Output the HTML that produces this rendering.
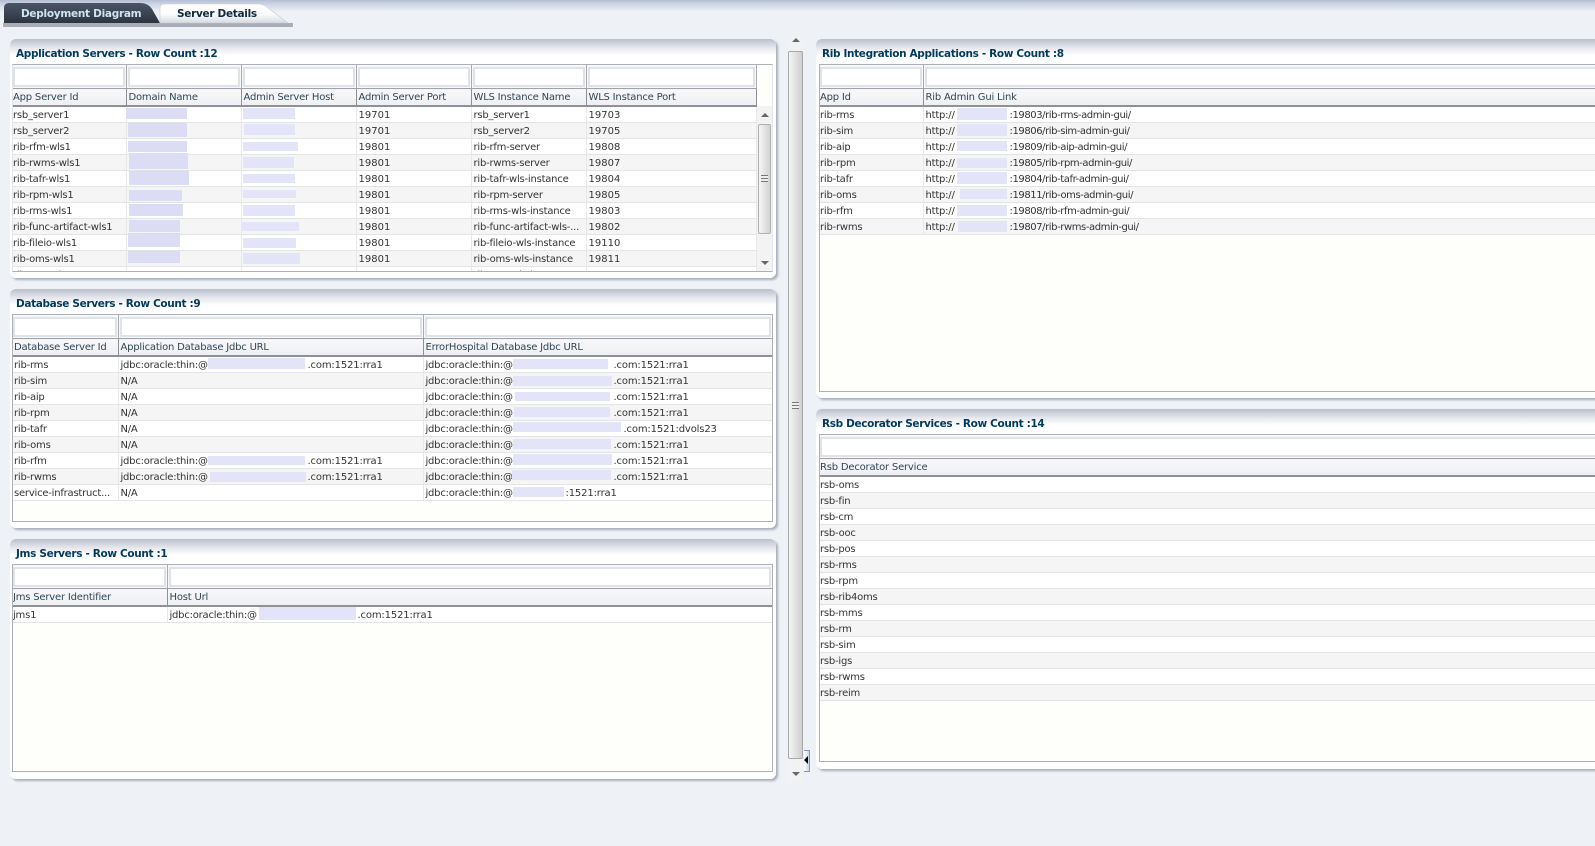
<!DOCTYPE html>
<html><head><meta charset="utf-8"><title>Server Details</title>
<style>
html,body{margin:0;padding:0}
body{width:1595px;height:846px;overflow:hidden;position:relative;background:#eef2f7;font-family:"DejaVu Sans","Liberation Sans",sans-serif;font-size:10px;color:#333}
#top{position:absolute;left:0;top:0;width:1595px;height:12px;background:linear-gradient(#b3bed4,#cfd6e3 35%,#eef2f7)}
.p{position:absolute;border-radius:6px;background:linear-gradient(#b9bfcd 0,#e6e8ee 9px,#fff 16px);box-shadow:2px 2px 2px #a8adb8}
.t{position:absolute;font-weight:bold;font-size:10.5px;color:#003a5c;white-space:nowrap;line-height:14px;letter-spacing:-.35px}
.g{position:absolute;background:#fefefa;border:solid #aeb0b6;border-width:1px;overflow:hidden;box-sizing:border-box}
.g.a{border-left-color:#e4e5e8;border-right-color:#e4e5e8}
table{border-collapse:collapse;table-layout:fixed;position:absolute;left:-1px;top:0}
td{padding:0;white-space:nowrap;overflow:hidden;position:relative}
tr.f td{background:#f7f8f9;border-right:1px solid #a8aab0;border-bottom:1px solid #a0a2a8;padding:2px 1px 1px 1px;box-sizing:border-box;height:23px}
tr.f div{height:16px;border:2px solid #dfe2e6;background:#fff}
tr.h td{height:17px;box-sizing:border-box;background:linear-gradient(#f8f8fa,#eeeff2);border-right:1px solid #8f9197;border-bottom:2px solid #8f9197;padding:2px 0 0 2px;color:#2f4656;line-height:13px;letter-spacing:-.2px}
tr.r td{height:16px;box-sizing:border-box;background:#fff;border-right:1px solid #e6e8ea;border-bottom:1px solid #e2e4e6;padding:2px 0 0 2px;line-height:13px;letter-spacing:-.22px}
tr.r td:first-child,tr.h td:first-child{padding-left:1px}
tr.r:nth-child(even) td{background:#f5f5f5}
td i{font-style:normal;position:absolute;top:2px;letter-spacing:-.15px}
.l i{letter-spacing:-.42px}
td.n{letter-spacing:0!important}
.x{position:absolute;background:#e4e4f8}
.y{position:absolute;background:#dddcf5}
</style></head><body>
<div id="top"></div>

<svg style="position:absolute;left:0;top:0" width="300" height="30">
<defs>
<linearGradient id="a" x1="0" y1="0" x2="0" y2="1"><stop offset="0" stop-color="#4a5566"/><stop offset="1" stop-color="#2e3440"/></linearGradient>
<linearGradient id="b" x1="0" y1="0" x2="0" y2="1"><stop offset="0" stop-color="#fff"/><stop offset=".55" stop-color="#fbfbfc"/><stop offset="1" stop-color="#d6dae1"/></linearGradient>
</defs>
<rect x="3" y="23" width="290" height="4" fill="#a8adb6"/>
<path d="M4 23V8Q4 3 9 3H140Q148 3 152 9L160 23Z" fill="url(#a)"/>
<path d="M160 23V8Q160 4 165 4H258Q264 4 268 8L288 23Z" fill="url(#b)" stroke="#c8ccd4" stroke-width=".6"/>
</svg>
<div class="t" style="left:21px;top:7px;color:#cfe3f0;letter-spacing:-.28px">Deployment Diagram</div>
<div class="t" style="left:177px;top:7px;color:#0f2a3f;letter-spacing:-.3px">Server Details</div>

<div class="p" style="left:10px;top:39px;width:766px;height:239px"></div>
<div class="t" style="left:16px;top:47px">Application Servers - Row Count :12</div>
<div class="g a" style="left:12px;top:64px;width:761px;height:208px">
<table style="width:744px"><col width="114"><col width="115"><col width="115"><col width="115"><col width="115"><col width="170">
<tr class="f"><td><div></div></td><td><div></div></td><td><div></div></td><td><div></div></td><td><div></div></td><td><div></div></td></tr>
<tr class="h"><td>App Server Id</td><td>Domain Name</td><td>Admin Server Host</td><td>Admin Server Port</td><td>WLS Instance Name</td><td>WLS Instance Port</td></tr>
<tr class="r"><td>rsb_server1</td><td></td><td></td><td class="n">19701</td><td>rsb_server1</td><td class="n">19703</td></tr>
<tr class="r"><td>rsb_server2</td><td></td><td></td><td class="n">19701</td><td>rsb_server2</td><td class="n">19705</td></tr>
<tr class="r"><td>rib-rfm-wls1</td><td></td><td></td><td class="n">19801</td><td>rib-rfm-server</td><td class="n">19808</td></tr>
<tr class="r"><td>rib-rwms-wls1</td><td></td><td></td><td class="n">19801</td><td>rib-rwms-server</td><td class="n">19807</td></tr>
<tr class="r"><td>rib-tafr-wls1</td><td></td><td></td><td class="n">19801</td><td>rib-tafr-wls-instance</td><td class="n">19804</td></tr>
<tr class="r"><td>rib-rpm-wls1</td><td></td><td></td><td class="n">19801</td><td>rib-rpm-server</td><td class="n">19805</td></tr>
<tr class="r"><td>rib-rms-wls1</td><td></td><td></td><td class="n">19801</td><td>rib-rms-wls-instance</td><td class="n">19803</td></tr>
<tr class="r"><td>rib-func-artifact-wls1</td><td></td><td></td><td class="n">19801</td><td>rib-func-artifact-wls-...</td><td class="n">19802</td></tr>
<tr class="r"><td>rib-fileio-wls1</td><td></td><td></td><td class="n">19801</td><td>rib-fileio-wls-instance</td><td class="n">19110</td></tr>
<tr class="r"><td>rib-oms-wls1</td><td></td><td></td><td class="n">19801</td><td>rib-oms-wls-instance</td><td class="n">19811</td></tr>
<tr class="r"><td>rib-test-wls1</td><td></td><td></td><td class="n">19801</td><td>rib-test-wls-instance</td><td class="n">19806</td></tr>
</table>
</div>
<!-- inner scrollbar -->
<div style="position:absolute;left:757px;top:106px;width:15px;height:165px;background:#f3f3f3"></div>
<div style="position:absolute;left:761px;top:113px;border:4px solid transparent;border-top:0;border-bottom:4px solid #666"></div>
<div style="position:absolute;left:758px;top:124px;width:13px;height:110px;box-sizing:border-box;border:1px solid #b0b0b0;border-radius:2px;background:linear-gradient(90deg,#f6f6f6,#d2d2d2)"></div>
<div style="position:absolute;left:761px;top:175px;width:7px;height:7px;background:repeating-linear-gradient(#777 0,#777 1px,#eee 1px,#eee 3px)"></div>
<div style="position:absolute;left:761px;top:261px;border:4px solid transparent;border-bottom:0;border-top:4px solid #666"></div>

<div class="y" style="left:126px;top:108px;width:61px;height:11px"></div>
<div class="y" style="left:128px;top:123px;width:59px;height:14px"></div>
<div class="y" style="left:128px;top:141px;width:59px;height:11px"></div>
<div class="y" style="left:129px;top:153px;width:59px;height:16px"></div>
<div class="y" style="left:129px;top:171px;width:60px;height:14px"></div>
<div class="y" style="left:129px;top:190px;width:53px;height:11px"></div>
<div class="y" style="left:129px;top:204px;width:54px;height:12px"></div>
<div class="y" style="left:129px;top:220px;width:51px;height:12px"></div>
<div class="y" style="left:128px;top:233px;width:52px;height:14px"></div>
<div class="y" style="left:128px;top:251px;width:52px;height:12px"></div>
<div class="x" style="left:243px;top:108px;width:52px;height:11px"></div>
<div class="x" style="left:244px;top:124px;width:51px;height:11px"></div>
<div class="x" style="left:243px;top:142px;width:55px;height:9px"></div>
<div class="x" style="left:243px;top:157px;width:51px;height:11px"></div>
<div class="x" style="left:243px;top:174px;width:52px;height:9px"></div>
<div class="x" style="left:243px;top:190px;width:53px;height:8px"></div>
<div class="x" style="left:243px;top:205px;width:52px;height:11px"></div>
<div class="x" style="left:242px;top:222px;width:57px;height:9px"></div>
<div class="x" style="left:243px;top:238px;width:53px;height:10px"></div>
<div class="x" style="left:243px;top:253px;width:57px;height:11px"></div>

<div class="p" style="left:10px;top:289px;width:766px;height:239px"></div>
<div class="t" style="left:16px;top:297px">Database Servers - Row Count :9</div>
<div class="g" style="left:12px;top:314px;width:761px;height:208px">
<table style="width:760px"><col width="106"><col width="305"><col width="349">
<tr class="f"><td><div></div></td><td><div></div></td><td><div></div></td></tr>
<tr class="h"><td style="padding-left:2px">Database Server Id</td><td>Application Database Jdbc URL</td><td>ErrorHospital Database Jdbc URL</td></tr>
<tr class="r"><td style="padding-left:2px">rib-rms</td><td>jdbc:oracle:thin:@<i style="left:189px">.com:1521:rra1</i></td><td>jdbc:oracle:thin:@<i style="left:190px">.com:1521:rra1</i></td></tr>
<tr class="r"><td style="padding-left:2px">rib-sim</td><td>N/A</td><td>jdbc:oracle:thin:@<i style="left:190px">.com:1521:rra1</i></td></tr>
<tr class="r"><td style="padding-left:2px">rib-aip</td><td>N/A</td><td>jdbc:oracle:thin:@<i style="left:190px">.com:1521:rra1</i></td></tr>
<tr class="r"><td style="padding-left:2px">rib-rpm</td><td>N/A</td><td>jdbc:oracle:thin:@<i style="left:190px">.com:1521:rra1</i></td></tr>
<tr class="r"><td style="padding-left:2px">rib-tafr</td><td>N/A</td><td>jdbc:oracle:thin:@<i style="left:200px">.com:1521:dvols23</i></td></tr>
<tr class="r"><td style="padding-left:2px">rib-oms</td><td>N/A</td><td>jdbc:oracle:thin:@<i style="left:190px">.com:1521:rra1</i></td></tr>
<tr class="r"><td style="padding-left:2px">rib-rfm</td><td>jdbc:oracle:thin:@<i style="left:189px">.com:1521:rra1</i></td><td>jdbc:oracle:thin:@<i style="left:190px">.com:1521:rra1</i></td></tr>
<tr class="r"><td style="padding-left:2px">rib-rwms</td><td>jdbc:oracle:thin:@<i style="left:189px">.com:1521:rra1</i></td><td>jdbc:oracle:thin:@<i style="left:190px">.com:1521:rra1</i></td></tr>
<tr class="r"><td style="padding-left:2px">service-infrastruct...</td><td>N/A</td><td>jdbc:oracle:thin:@<i style="left:142px">:1521:rra1</i></td></tr>
</table>
</div>
<div class="x" style="left:208px;top:358px;width:97px;height:11px"></div>
<div class="x" style="left:208px;top:456px;width:97px;height:9px"></div>
<div class="x" style="left:210px;top:472px;width:96px;height:10px"></div>
<div class="x" style="left:513px;top:359px;width:95px;height:10px"></div>
<div class="x" style="left:513px;top:376px;width:99px;height:10px"></div>
<div class="x" style="left:515px;top:392px;width:95px;height:9px"></div>
<div class="x" style="left:514px;top:407px;width:96px;height:10px"></div>
<div class="x" style="left:513px;top:422px;width:108px;height:10px"></div>
<div class="x" style="left:513px;top:439px;width:98px;height:10px"></div>
<div class="x" style="left:513px;top:454px;width:99px;height:11px"></div>
<div class="x" style="left:512px;top:470px;width:99px;height:10px"></div>
<div class="x" style="left:513px;top:487px;width:51px;height:10px"></div>

<div class="p" style="left:10px;top:539px;width:766px;height:240px"></div>
<div class="t" style="left:16px;top:547px">Jms Servers - Row Count :1</div>
<div class="g" style="left:12px;top:564px;width:761px;height:208px">
<table style="width:760px"><col width="155"><col width="605">
<tr class="f"><td><div></div></td><td><div></div></td></tr>
<tr class="h"><td>Jms Server Identifier</td><td>Host Url</td></tr>
<tr class="r"><td>jms1</td><td>jdbc:oracle:thin:@<i style="left:190px">.com:1521:rra1</i></td></tr>
</table>
</div>
<div class="x" style="left:259px;top:607px;width:97px;height:13px"></div>

<!-- splitter -->
<div style="position:absolute;left:788px;top:35px;width:15px;height:747px;background:#f1f2f4"></div>
<div style="position:absolute;left:792px;top:38px;border:4px solid transparent;border-top:0;border-bottom:4px solid #666"></div>
<div style="position:absolute;left:788px;top:51px;width:15px;height:708px;box-sizing:border-box;border:1px solid #a8a8a8;border-radius:2px;background:linear-gradient(90deg,#f5f5f5,#cfcfcf)"></div>
<div style="position:absolute;left:792px;top:402px;width:7px;height:7px;background:repeating-linear-gradient(#777 0,#777 1px,#eee 1px,#eee 3px)"></div>
<div style="position:absolute;left:792px;top:772px;border:4px solid transparent;border-bottom:0;border-top:4px solid #666"></div>
<div style="position:absolute;left:804px;top:750px;width:6px;height:22px;box-sizing:border-box;border-right:1px solid #8a97b0;border-top:1px solid #8a97b0;border-bottom:1px solid #8a97b0;background:linear-gradient(90deg,#fff,#c8d5ea)"></div>
<div style="position:absolute;left:804px;top:756px;border:4px solid transparent;border-left:0;border-right:4px solid #000"></div>

<div class="p" style="left:816px;top:39px;width:790px;height:359px"></div>
<div class="t" style="left:822px;top:47px">Rib Integration Applications - Row Count :8</div>
<div class="g" style="left:819px;top:64px;width:790px;height:328px">
<table class="l" style="width:801px"><col width="104"><col width="697">
<tr class="f"><td><div></div></td><td><div></div></td></tr>
<tr class="h"><td>App Id</td><td>Rib Admin Gui Link</td></tr>
<tr class="r"><td>rib-rms</td><td>http://<i style="left:86px">:19803/rib-rms-admin-gui/</i></td></tr>
<tr class="r"><td>rib-sim</td><td>http://<i style="left:86px">:19806/rib-sim-admin-gui/</i></td></tr>
<tr class="r"><td>rib-aip</td><td>http://<i style="left:86px">:19809/rib-aip-admin-gui/</i></td></tr>
<tr class="r"><td>rib-rpm</td><td>http://<i style="left:86px">:19805/rib-rpm-admin-gui/</i></td></tr>
<tr class="r"><td>rib-tafr</td><td>http://<i style="left:86px">:19804/rib-tafr-admin-gui/</i></td></tr>
<tr class="r"><td>rib-oms</td><td>http://<i style="left:86px">:19811/rib-oms-admin-gui/</i></td></tr>
<tr class="r"><td>rib-rfm</td><td>http://<i style="left:86px">:19808/rib-rfm-admin-gui/</i></td></tr>
<tr class="r"><td>rib-rwms</td><td>http://<i style="left:86px">:19807/rib-rwms-admin-gui/</i></td></tr>
</table>
</div>
<div class="x" style="left:957px;top:108px;width:50px;height:12px"></div>
<div class="x" style="left:957px;top:124px;width:50px;height:12px"></div>
<div class="x" style="left:957px;top:141px;width:50px;height:10px"></div>
<div class="x" style="left:957px;top:158px;width:50px;height:10px"></div>
<div class="x" style="left:957px;top:172px;width:50px;height:12px"></div>
<div class="x" style="left:960px;top:189px;width:47px;height:10px"></div>
<div class="x" style="left:957px;top:205px;width:50px;height:11px"></div>
<div class="x" style="left:958px;top:221px;width:49px;height:11px"></div>

<div class="p" style="left:816px;top:409px;width:790px;height:360px"></div>
<div class="t" style="left:822px;top:417px">Rsb Decorator Services - Row Count :14</div>
<div class="g" style="left:819px;top:434px;width:790px;height:328px">
<table style="width:800px"><col width="800">
<tr class="f"><td><div></div></td></tr>
<tr class="h"><td>Rsb Decorator Service</td></tr>
<tr class="r"><td>rsb-oms</td></tr>
<tr class="r"><td>rsb-fin</td></tr>
<tr class="r"><td>rsb-cm</td></tr>
<tr class="r"><td>rsb-ooc</td></tr>
<tr class="r"><td>rsb-pos</td></tr>
<tr class="r"><td>rsb-rms</td></tr>
<tr class="r"><td>rsb-rpm</td></tr>
<tr class="r"><td>rsb-rib4oms</td></tr>
<tr class="r"><td>rsb-mms</td></tr>
<tr class="r"><td>rsb-rm</td></tr>
<tr class="r"><td>rsb-sim</td></tr>
<tr class="r"><td>rsb-igs</td></tr>
<tr class="r"><td>rsb-rwms</td></tr>
<tr class="r"><td>rsb-reim</td></tr>
</table>
</div>
</body></html>
